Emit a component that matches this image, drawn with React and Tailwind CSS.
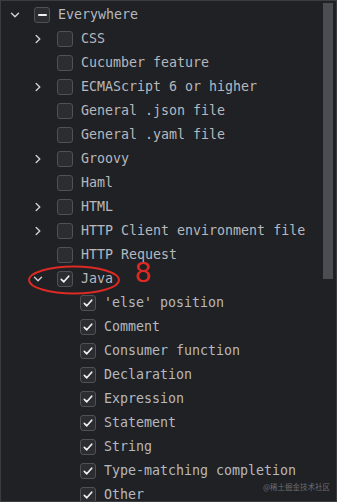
import React from "react";

const rows = [
  { t: "Everywhere", l: 0, chev: "down", cb: "ind" },
  { t: "CSS", l: 1, chev: "right" },
  { t: "Cucumber feature", l: 1 },
  { t: "ECMAScript 6 or higher", l: 1, chev: "right" },
  { t: "General .json file", l: 1 },
  { t: "General .yaml file", l: 1 },
  { t: "Groovy", l: 1, chev: "right" },
  { t: "Haml", l: 1 },
  { t: "HTML", l: 1, chev: "right" },
  { t: "HTTP Client environment file", l: 1, chev: "right" },
  { t: "HTTP Request", l: 1 },
  { t: "Java", l: 1, chev: "down", cb: "on" },
  { t: "'else' position", l: 2, cb: "on" },
  { t: "Comment", l: 2, cb: "on" },
  { t: "Consumer function", l: 2, cb: "on" },
  { t: "Declaration", l: 2, cb: "on" },
  { t: "Expression", l: 2, cb: "on" },
  { t: "Statement", l: 2, cb: "on" },
  { t: "String", l: 2, cb: "on" },
  { t: "Type-matching completion", l: 2, cb: "on" },
  { t: "Other", l: 2, cb: "on" },
];

const indent = ["pl-[4px]", "pl-[27px]", "pl-[50px]"];

function Chevron({ dir }) {
  if (!dir) return <span className="w-[20px] shrink-0" />;
  return (
    <span className="w-[20px] shrink-0 flex items-center justify-center">
      <svg width="10" height="10" viewBox="0 0 10 10" fill="none">
        {dir === "right" ? (
          <path d="M3.2 1.5 L6.8 5 L3.2 8.5" stroke="#ced0d6" strokeWidth="1.4" strokeLinecap="round" strokeLinejoin="round" />
        ) : (
          <path d="M1.5 3.2 L5 6.8 L8.5 3.2" stroke="#ced0d6" strokeWidth="1.4" strokeLinecap="round" strokeLinejoin="round" />
        )}
      </svg>
    </span>
  );
}

function Box({ state }) {
  return (
    <span className="ml-[9px] w-[16px] h-[16px] shrink-0 rounded-[3px] border border-[#4e5157] bg-[#2b2d31] flex items-center justify-center">
      {state === "on" && (
        <svg width="12" height="12" viewBox="0 0 12 12" fill="none">
          <path d="M2.3 6.3 L4.8 8.8 L9.7 3.2" stroke="#eef0f4" strokeWidth="1.7" strokeLinecap="round" strokeLinejoin="round" />
        </svg>
      )}
      {state === "ind" && <span className="w-[9px] h-[2px] rounded-[1px] bg-[#eef0f4]" />}
    </span>
  );
}

export default function App() {
  return (
    <div className="w-[337px] h-[502px] overflow-hidden relative bg-[#1f2125] border border-[#3a3c41] flex">
      <div className="flex-1 pt-[2px] flex flex-col">
        {rows.map((r, i) => (
          <div key={i} className={`h-[24px] shrink-0 flex items-center ${indent[r.l]}`}>
            <Chevron dir={r.chev} />
            <Box state={r.cb} />
            <span className="ml-[8px] whitespace-nowrap text-[13.3px] text-[#b6b8be] leading-none font-['DejaVu_Sans_Mono',monospace]">
              {r.t}
            </span>
          </div>
        ))}
      </div>
      <div className="w-[13px] shrink-0 pt-[2px] pr-[2px] bg-[#1f2125]">
        <div className="w-[10px] h-[276px] bg-[#4b4d52]" />
      </div>
      <svg className="absolute left-[26px] top-[263px]" width="94" height="32" viewBox="0 0 94 32">
        <ellipse cx="47" cy="16" rx="45" ry="13.5" fill="none" stroke="#dd2a24" strokeWidth="2" />
      </svg>
      <span className="absolute left-[134px] top-[261px] text-[29px] leading-[21px] text-[#dd2a24] font-['Liberation_Sans',sans-serif]">
        8
      </span>
      <span className="absolute left-[262px] top-[482px] whitespace-nowrap text-[7.5px] leading-none text-[#6c6e73] font-['Noto_Sans_CJK_SC',sans-serif]">
        @稀土掘金技术社区
      </span>
    </div>
  );
}
